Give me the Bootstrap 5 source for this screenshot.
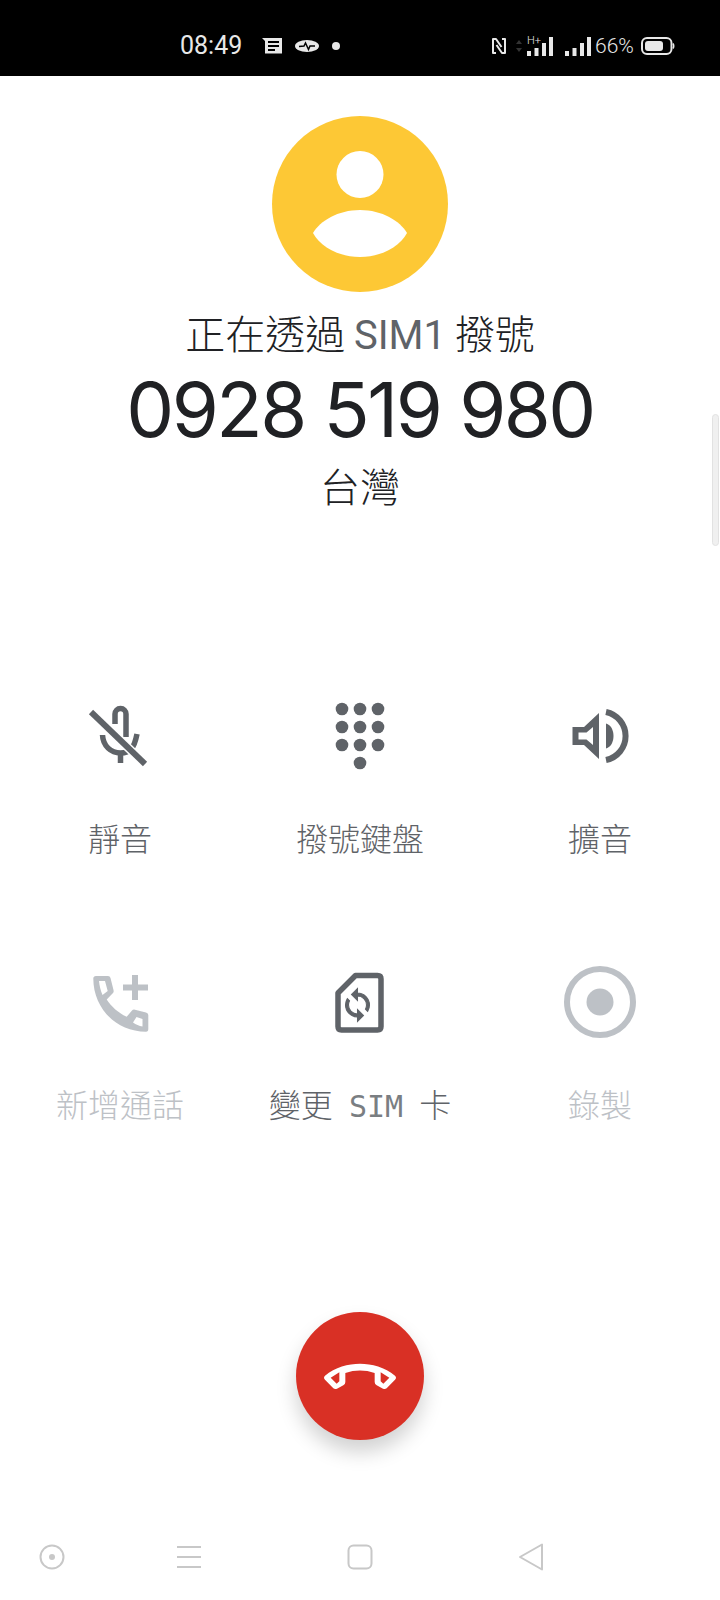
<!doctype html>
<html lang="en">
<head>
<meta charset="utf-8">
<meta name="viewport" content="width=device-width, initial-scale=1">
<title>Dialing</title>
<link href="https://cdn.jsdelivr.net/npm/bootstrap@5.3.5/dist/css/bootstrap.min.css" rel="stylesheet">
<style>
  body { width: 720px; height: 1600px; overflow: hidden; background: #fff; font-family: "Noto Sans CJK TC", sans-serif; font-weight: 300; position: relative; }
  .status-row { height: 76px; background: #000; color: #e8e8e8; padding: 16px 0 0 180px; }
  .status-time { font: 400 25px/30px Roboto, sans-serif; width: 80px; }
  .status-wave { margin-left: 11px; }
  .status-dot { margin-left: 13px; }
  .status-right { margin-left: 151px; }
  .status-pct { font: 300 21px/24px Roboto, sans-serif; width: 46px; }
  .caller-pic { width: 176px; height: 176px; margin-top: 40px; }
  .dial-title { font-size: 40px; line-height: 48px; margin-top: 16px; color: #202124; }
  .dial-title .sim-txt { font-family: Roboto, sans-serif; font-weight: 400; color: #5f6368; }
  .dial-num { font-family: Inter, sans-serif; font-weight: 400; font-size: 76px; letter-spacing: -2.5px; line-height: 84px; margin-top: 7px; color: #202124; white-space: nowrap; }
  .dial-region { font-size: 40px; line-height: 48px; margin-top: 10px; color: #202124; }
  .act-grid { display: grid; grid-template-columns: repeat(3, 240px); row-gap: 103px; margin-top: 187px; }
  .act-item { text-align: center; color: #5f6368; }
  .act-item.off { color: #bdc1c6; }
  .act-item svg { display: block; margin: 0 auto 39px; width: 80px; height: 80px; }
  .act-label { font-size: 32px; line-height: 44px; height: 44px; white-space: nowrap; }
  .act-label.hand { font-family: "DejaVu Sans Mono", "Noto Sans CJK TC", monospace; color: #5f6368; padding-top: 3px; word-spacing: -3px; }
  .act-label.hand span { font-size: 30px; color: #7a7e82; }
  .end-btn { width: 128px; height: 128px; margin-top: 187px; background: #d93025; box-shadow: 0 12px 20px rgba(0,0,0,.18); border: 0; padding: 0; }
  .nav-strip { margin-top: 103px; padding-left: 38px; gap: 0; }
  .nav-strip svg { width: 28px; height: 28px; flex: none; }
  .nav-strip .nav-second { margin-left: 109px; }
  .nav-strip .nav-third { margin-left: 143px; }
  .nav-strip .nav-fourth { margin-left: 143px; }
  .scroll-pill { position: absolute; right: 1px; top: 414px; width: 7px; height: 132px; background: #f0f0f0; border: 1px solid #e2e2e2; border-radius: 4px; }
</style>
</head>
<body>

  <div class="status-row d-flex align-items-center">
    <div class="status-time">08:49</div>
    <svg width="24" height="20" viewBox="0 0 24 20">
      <path d="M2 2H22V17.500H5V5Z" fill="#e8e8e8"/>
      <path d="M8 6H19M8 10H19M8 14H15" stroke="#000" stroke-width="2"/>
    </svg>
    <svg width="24" height="14" viewBox="0 0 24 14" class="status-wave">
      <ellipse cx="12" cy="7" rx="12" ry="6" fill="#e8e8e8"/>
      <path d="M4 7.500L9 7L10.500 4L13.500 10.500L15 7H20" fill="none" stroke="#000" stroke-width="1.500"/>
    </svg>
    <svg width="8" height="8" viewBox="0 0 8 8" class="status-dot"><circle cx="4" cy="4" r="4" fill="#e8e8e8"/></svg>
    <div class="status-right d-flex align-items-center">
      <svg width="16" height="20" viewBox="0 0 16 20">
        <path d="M5 17H2V3H5L10.500 11M11 3H14V17H11L5.500 9" fill="none" stroke="#e8e8e8" stroke-width="2" stroke-linejoin="round"/>
      </svg>
      <svg width="8" height="14" viewBox="0 0 8 14" class="ms-2 me-1"><path d="M4 1L7 5H1ZM4 13L7 9H1Z" fill="#333"/></svg>
      <svg width="26" height="22" viewBox="0 0 26 22" class="me-2">
        <text x="0" y="9" font-family="Roboto" font-size="11" fill="#e8e8e8">H+</text>
        <path d="M0 16h4v5H0ZM7.500 13h4v8h-4ZM15 8h4v13h-4ZM22 2h4v19h-4Z" fill="#e8e8e8"/>
      </svg>
      <svg width="26" height="22" viewBox="0 0 26 22" class="ms-1 me-1">
        <path d="M0 16h4v5H0ZM7.500 13h4v8h-4ZM15 8h4v13h-4ZM22 2h4v19h-4Z" fill="#e8e8e8"/>
      </svg>
      <div class="status-pct">66%</div>
      <svg width="34" height="18" viewBox="0 0 34 18">
        <rect x="1" y="1" width="29.500" height="16" rx="5" fill="none" stroke="#e8e8e8" stroke-width="2"/>
        <rect x="4" y="4" width="18" height="10" rx="3" fill="#e8e8e8"/>
        <path d="M32 6.500q1.500 2.500 0 5" fill="none" stroke="#e8e8e8" stroke-width="1.500"/>
      </svg>
    </div>
  </div>

  <div class="d-flex flex-column align-items-center">
    <svg class="caller-pic d-block" viewBox="0 0 176 176">
      <circle cx="88" cy="88" r="88" fill="#fdc835"/>
      <circle cx="88" cy="58.500" r="23.500" fill="#fff"/>
      <path d="M41 117C48 105 66 94 88 94S128 105 135 117C128 130 110 141 88 141S48 130 41 117Z" fill="#fff"/>
    </svg>
    <div class="dial-title">正在透過 <span class="sim-txt">SIM1</span> 撥號</div>
    <div class="dial-num">0928 519 980</div>
    <div class="dial-region">台灣</div>

    <div class="act-grid">
      <div class="act-item">
        <svg viewBox="0 0 80 80">
          <g fill="none" stroke="#5f6368" stroke-width="5.500">
            <path d="M35 28V18a5.500 5.500 0 0 1 11 0V41"/>
            <path d="M22.500 39C23 50 31 57 40.500 57C50 57 54 53 57 38"/>
            <path d="M40.500 56V67"/>
          </g>
          <path d="M11 16L65 68" stroke="#fff" stroke-width="9"/>
          <path d="M11 16L65 68" stroke="#5f6368" stroke-width="6"/>
        </svg>
        <div class="act-label">靜音</div>
      </div>
      <div class="act-item">
        <svg viewBox="0 0 80 80" fill="#5f6368">
          <circle cx="22" cy="13" r="6.300"/><circle cx="40" cy="13" r="6.300"/><circle cx="58" cy="13" r="6.300"/>
          <circle cx="22" cy="31" r="6.300"/><circle cx="40" cy="31" r="6.300"/><circle cx="58" cy="31" r="6.300"/>
          <circle cx="22" cy="49" r="6.300"/><circle cx="40" cy="49" r="6.300"/><circle cx="58" cy="49" r="6.300"/>
          <circle cx="40" cy="67" r="6.300"/>
        </svg>
        <div class="act-label">撥號鍵盤</div>
      </div>
      <div class="act-item">
        <svg viewBox="0 0 80 80" fill="#5f6368">
          <g transform="translate(-3 0)">
            <path fill-rule="evenodd" d="M15.500 31H27L42 17V63L27 49H15.500ZM21.500 36.500V43.500H29.500L36 49V31L29.500 36.500Z"/>
            <path d="M49 27.500C59 30 59 50 49 52.500Z"/>
            <path d="M49 16A24.500 24.500 0 0 1 49 64" fill="none" stroke="#5f6368" stroke-width="6"/>
          </g>
        </svg>
        <div class="act-label">擴音</div>
      </div>

      <div class="act-item off">
        <svg viewBox="0 0 80 80">
          <path fill-rule="evenodd" fill="#bdc1c6" d="M16 14H28Q30 14 30.500 16L33.500 28Q34 30 33 31L26.700 37.500C31 44 38 51 46.700 54.700L52 48.500Q53 47.300 55 47.700L66 50.500Q68.300 51 68.300 53V67Q68.300 69.700 66 69.700C36 69.700 13.300 46 13.300 16.500Q13.300 14 16 14ZM19 19H25L27.700 29L22.500 33C20.500 28 19.500 24 19 19ZM53 60.500L56.500 55L62.500 57V64.500C59 64 56 62.500 53 60.500Z"/>
          <path d="M55 13V38M43 25.500H68" stroke="#bdc1c6" stroke-width="6"/>
        </svg>
        <div class="act-label">新增通話</div>
      </div>
      <div class="act-item">
        <svg viewBox="0 0 80 80">
          <g transform="translate(-1.500 0)">
            <path d="M37 13.500H59q3.500 0 3.500 3.500V64.500q0 3.500-3.500 3.500H23q-3.500 0-3.500-3.500V31Z" fill="none" stroke="#5f6368" stroke-width="5.500" stroke-linejoin="round"/>
            <path transform="translate(21 25) scale(1.5)" d="M12 4V1L8 5l4 4V6c3.310 0 6 2.690 6 6 0 1.010-.25 1.970-.7 2.800l1.460 1.460C19.540 15.030 20 13.570 20 12c0-4.420-3.580-8-8-8zm0 14c-3.310 0-6-2.690-6-6 0-1.010.25-1.970.7-2.800L5.240 7.740C4.460 8.970 4 10.430 4 12c0 4.420 3.580 8 8 8v3l4-4-4-4v3z" fill="#5f6368" stroke="#5f6368" stroke-width=".7"/>
          </g>
        </svg>
        <div class="act-label hand">變更 <span>SIM</span> 卡</div>
      </div>
      <div class="act-item off">
        <svg viewBox="0 0 80 80">
          <circle cx="40" cy="40" r="33" fill="none" stroke="#bdc1c6" stroke-width="6"/>
          <circle cx="40" cy="40" r="13.500" fill="#bdc1c6"/>
        </svg>
        <div class="act-label">錄製</div>
      </div>
    </div>

    <button type="button" class="btn end-btn rounded-circle d-flex align-items-center justify-content-center">
      <svg width="90" height="90" viewBox="105 92 270 270">
        <path fill-rule="evenodd" fill="#fff" d="M135 226C165 200 205 190 240 190S315 200 345 226Q351 232 345 238L320 264Q315 268 309 265L290 255Q284 252 284 245L284 218C255 208 225 208 196 218L196 245Q196 252 190 255L171 265Q165 268 160 264L135 238Q129 232 135 226ZM152 232L178 216V243L170 250ZM328 232L302 216V243L310 250Z"/>
      </svg>
    </button>
  </div>

  <div class="nav-strip d-flex align-items-center">
    <svg viewBox="0 0 28 28"><circle cx="14" cy="14" r="11.500" fill="none" stroke="#c8c8c8" stroke-width="2"/><circle cx="14" cy="14" r="3" fill="#c8c8c8"/></svg>
    <svg class="nav-second" viewBox="0 0 28 28"><path d="M2 4H26M2 14H26M2 24H26" stroke="#c8c8c8" stroke-width="2"/></svg>
    <svg class="nav-third" viewBox="0 0 28 28"><rect x="2.500" y="2.500" width="23" height="23" rx="5" fill="none" stroke="#c8c8c8" stroke-width="2"/></svg>
    <svg class="nav-fourth" viewBox="0 0 28 28"><path d="M3 14L25 1.500V26.500Z" fill="none" stroke="#c8c8c8" stroke-width="2" stroke-linejoin="round"/></svg>
  </div>

  <div class="scroll-pill"></div>

<script src="https://cdn.jsdelivr.net/npm/bootstrap@5.3.5/dist/js/bootstrap.bundle.min.js"></script>
</body>
</html>
